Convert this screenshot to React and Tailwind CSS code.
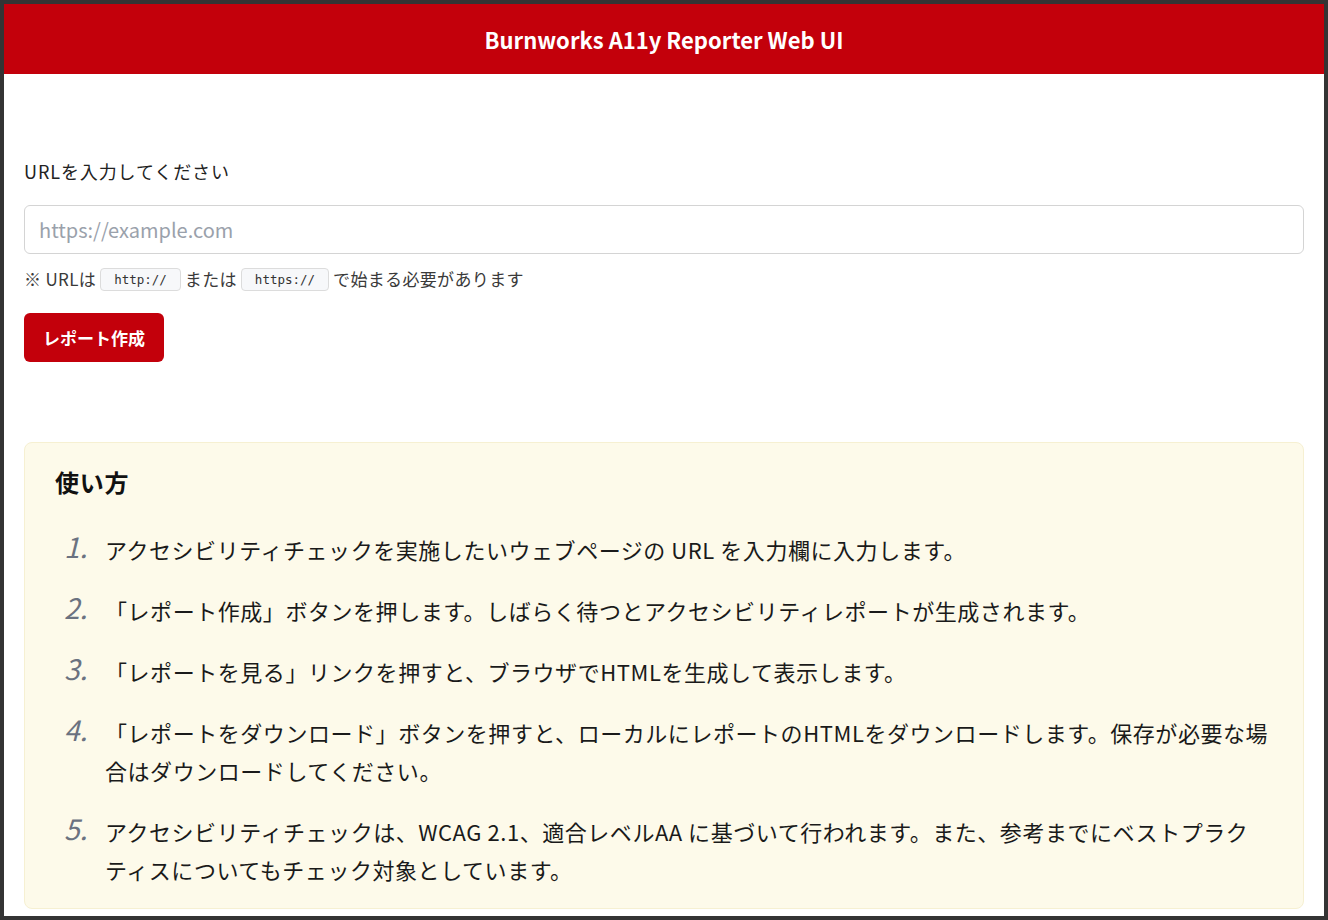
import { useState } from 'react'

const steps = [
  'アクセシビリティチェックを実施したいウェブページの URL を入力欄に入力します。',
  '「レポート作成」ボタンを押します。しばらく待つとアクセシビリティレポートが生成されます。',
  '「レポートを見る」リンクを押すと、ブラウザでHTMLを生成して表示します。',
  '「レポートをダウンロード」ボタンを押すと、ローカルにレポートのHTMLをダウンロードします。保存が必要な場合はダウンロードしてください。',
  'アクセシビリティチェックは、WCAG 2.1、適合レベルAA に基づいて行われます。また、参考までにベストプラクテ\u2060ィスについてもチェック対象としています。',
]

const mono = { fontFamily: '"DejaVu Sans Mono", monospace' }

function App() {
  const [url, setUrl] = useState('')

  return (
    <div
      lang="ja"
      className="h-[920px] overflow-hidden border-4 border-[#343434] bg-white text-[#1f1f1f]"
      style={{ fontFamily: '"Noto Sans CJK JP", "Noto Sans", sans-serif' }}
    >
      {/* ヘッダー */}
      <header className="flex h-[70px] items-center justify-center bg-[#c3000b]">
        <h1 className="text-[22px] font-bold text-white">Burnworks A11y Reporter Web UI</h1>
      </header>

      <main className="px-5 pt-[84px]">
        <label htmlFor="url" className="block text-[18px] leading-[27px] tracking-[0.05em] text-[#222]">
          URLを入力してください
        </label>
        <input
          id="url"
          type="text"
          value={url}
          onChange={(e) => setUrl(e.target.value)}
          placeholder="https://example.com"
          className="mt-[20px] block h-[49px] w-full rounded-md border border-[#d4d4d4] px-[14px] text-[20px] placeholder:text-[#9aa1ab] focus:outline-none"
        />
        <p className="mt-[13px] flex items-center text-[17px] leading-[24px] tracking-[0.02em] text-[#3a3a3a]">
          ※ URLは
          <code className="mx-1 rounded border border-[#dcdcdc] bg-[#f7f8fa] px-[13px] py-[1px] text-[12.5px] leading-[19px] tracking-normal text-[#333]" style={mono}>
            http://
          </code>
          または
          <code className="mx-1 rounded border border-[#dcdcdc] bg-[#f7f8fa] px-[13px] py-[1px] text-[12.5px] leading-[19px] tracking-normal text-[#333]" style={mono}>
            https://
          </code>
          で始まる必要があります
        </p>
        <button className="mt-[22px] h-[49px] w-[140px] rounded-md bg-[#c3000b] text-[17px] font-bold text-white">
          レポート作成
        </button>

        {/* 使い方 */}
        <section className="mt-[80px] rounded-lg border border-[#f6f0d2] bg-[#fdfaea] px-[30px] pt-[23px] pb-[20px]">
          <h2 className="text-[24px] font-bold leading-[31px] tracking-[0.03em] text-[#111]">使い方</h2>
          <ol className="mt-[33px] flex flex-col gap-[23px] pl-[9px]">
            {steps.map((s, i) => (
              <li key={i} className="flex">
                <span className="relative -top-[3px] w-[41px] shrink-0 text-[28px] italic leading-[38px] text-[#6b7280]">{i + 1}.</span>
                <span className="text-[22px] leading-[38px] tracking-[0.025em] text-[#1a1a1a] [line-break:strict]">{s}</span>
              </li>
            ))}
          </ol>
        </section>
      </main>
    </div>
  )
}

export default App
